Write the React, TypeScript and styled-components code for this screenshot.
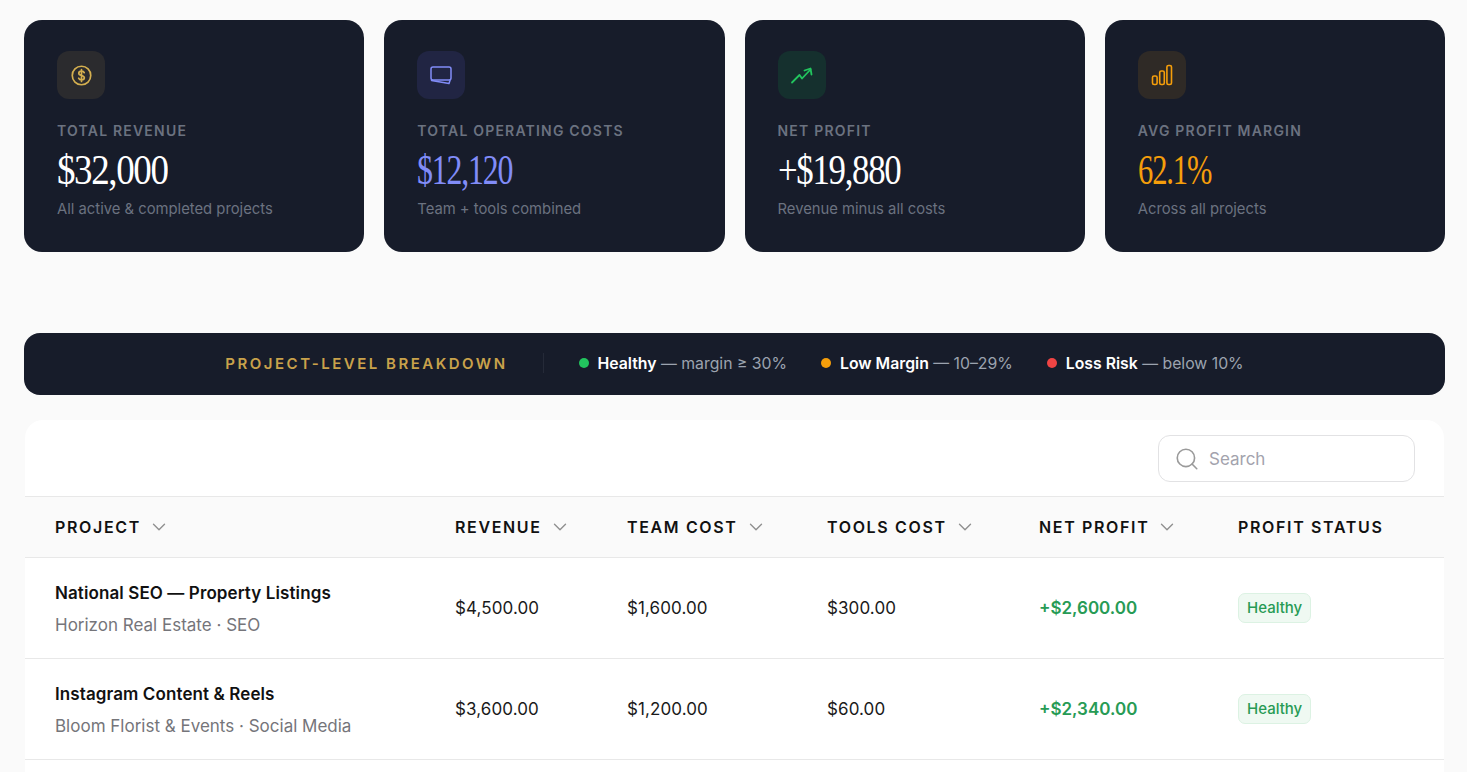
import { Search, ChevronDown } from 'lucide-react'
import styled, { createGlobalStyle } from 'styled-components'

const GlobalStyle = createGlobalStyle`
  html, body {
    margin: 0;
    height: 100%;
    overflow: hidden;
    background: #fafafa;
  }

  body {
    font-family: 'Inter', 'Liberation Sans', sans-serif;
  }
`

type Tone = 'gold' | 'indigo' | 'green' | 'amber'

const toneColors: Record<Tone, string> = {
  gold: '#d4af4f',
  indigo: '#818cf8',
  green: '#22c55e',
  amber: '#f59e0b',
}

const toneBackgrounds: Record<Tone, string> = {
  gold: '#2b2b2e',
  indigo: '#212543',
  green: '#15302e',
  amber: '#2f2a26',
}

const DollarIcon = () => (
  <svg viewBox="0 0 20 20" width="21" height="21" fill="none" stroke="currentColor" strokeWidth="1.6" strokeLinecap="round">
    <circle cx="10" cy="10" r="8.8" />
    <path d="M12.6 7.3c-.4-1-1.4-1.5-2.6-1.5-1.5 0-2.6.8-2.6 2s1 1.8 2.6 2.2 2.7 1 2.7 2.2-1.2 2-2.7 2c-1.3 0-2.3-.6-2.7-1.6M10 4.4v11.2" />
  </svg>
)

const ScreenIcon = () => (
  <svg viewBox="0 0 24 20" width="24" height="20" fill="none" stroke="currentColor" strokeWidth="1.5" strokeLinecap="round" strokeLinejoin="round">
    <rect x="2" y="2" width="20" height="13" rx="2" />
    <path d="M2.5 15.5 20 18.5l1-3" />
  </svg>
)

const TrendIcon = () => (
  <svg viewBox="0 0 24 20" width="24" height="20" fill="none" stroke="currentColor" strokeWidth="1.8" strokeLinecap="round" strokeLinejoin="round">
    <path d="M2 17.5 9.5 10l2.5 3.5L20.5 4.5" />
    <path d="M14.5 5.5l6-2 1 6" />
  </svg>
)

const BarsIcon = () => (
  <svg viewBox="0 0 22 22" width="22" height="22" fill="none" stroke="currentColor" strokeWidth="1.6" strokeLinejoin="round">
    <rect x="1.5" y="12" width="4.6" height="8.5" rx="1.6" />
    <rect x="8.7" y="7" width="4.6" height="13.5" rx="1.6" />
    <rect x="15.9" y="1.5" width="4.6" height="19" rx="1.6" />
  </svg>
)

const stats = [
  { tone: 'gold' as Tone, icon: <DollarIcon />, label: 'Total Revenue', value: '$32,000', color: '#ffffff', squeeze: 0.86, note: 'All active & completed projects' },
  { tone: 'indigo' as Tone, icon: <ScreenIcon />, label: 'Total Operating Costs', value: '$12,120', color: '#818cf8', squeeze: 0.74, note: 'Team + tools combined' },
  { tone: 'green' as Tone, icon: <TrendIcon />, label: 'Net Profit', value: '+$19,880', color: '#ffffff', squeeze: 0.81, note: 'Revenue minus all costs' },
  { tone: 'amber' as Tone, icon: <BarsIcon />, label: 'Avg Profit Margin', value: '62.1%', color: '#f59e0b', squeeze: 0.71, note: 'Across all projects' },
]

const legend = [
  { color: '#22c55e', name: 'Healthy', rule: 'margin ≥ 30%' },
  { color: '#f59e0b', name: 'Low Margin', rule: '10–29%' },
  { color: '#ef4444', name: 'Loss Risk', rule: 'below 10%' },
]

const columns = [
  { title: 'Project', sortable: true },
  { title: 'Revenue', sortable: true },
  { title: 'Team Cost', sortable: true },
  { title: 'Tools Cost', sortable: true },
  { title: 'Net Profit', sortable: true },
  { title: 'Profit Status', sortable: false },
]

const projects = [
  { name: 'National SEO — Property Listings', client: 'Horizon Real Estate · SEO', revenue: '$4,500.00', team: '$1,600.00', tools: '$300.00', net: '+$2,600.00' },
  { name: 'Instagram Content & Reels', client: 'Bloom Florist & Events · Social Media', revenue: '$3,600.00', team: '$1,200.00', tools: '$60.00', net: '+$2,340.00' },
]

const App = () => {
  return (
    <Page>
      <GlobalStyle />
      <StatsGrid>
        {stats.map((stat) => (
          <StatCard key={stat.label}>
            <IconTile $tone={stat.tone}>{stat.icon}</IconTile>
            <StatLabel>{stat.label}</StatLabel>
            <StatValue $color={stat.color} $squeeze={stat.squeeze}>
              {stat.value}
            </StatValue>
            <StatNote>{stat.note}</StatNote>
          </StatCard>
        ))}
      </StatsGrid>

      <Banner>
        <BannerTitle>Project-Level Breakdown</BannerTitle>
        <BannerDivider />
        {legend.map((item) => (
          <LegendItem key={item.name}>
            <LegendDot $color={item.color} />
            <span>
              <strong>{item.name}</strong> — {item.rule}
            </span>
          </LegendItem>
        ))}
      </Banner>

      <TableCard>
        <Toolbar>
          <SearchBox>
            <Search size={26} strokeWidth={1.5} color="#9a9a9a" />
            <SearchInput placeholder="Search" />
          </SearchBox>
        </Toolbar>
        <HeaderRow>
          {columns.map((column) => (
            <HeaderCell key={column.title}>
              {column.title}
              {column.sortable && <ChevronDown size={22} strokeWidth={1.5} color="#8f8f8f" />}
            </HeaderCell>
          ))}
        </HeaderRow>
        {projects.map((project) => (
          <BodyRow key={project.name}>
            <ProjectCell>
              <ProjectName>{project.name}</ProjectName>
              <ProjectClient>{project.client}</ProjectClient>
            </ProjectCell>
            <MoneyCell>{project.revenue}</MoneyCell>
            <MoneyCell>{project.team}</MoneyCell>
            <MoneyCell>{project.tools}</MoneyCell>
            <NetCell>{project.net}</NetCell>
            <div>
              <StatusBadge>Healthy</StatusBadge>
            </div>
          </BodyRow>
        ))}
      </TableCard>
    </Page>
  )
}

const Page = styled.div`
  height: 772px;
  box-sizing: border-box;
  padding: 20px 22px 0 24px;
  display: flex;
  flex-direction: column;
  overflow: hidden;
`

const StatsGrid = styled.div`
  display: grid;
  grid-template-columns: repeat(4, 1fr);
  gap: 20px;
`

const StatCard = styled.div`
  height: 232px;
  box-sizing: border-box;
  padding: 31px 33px 0;
  background: #171c2a;
  border-radius: 18px;
`

const IconTile = styled.div<{ $tone: Tone }>`
  width: 48px;
  height: 48px;
  border-radius: 12px;
  display: flex;
  align-items: center;
  justify-content: center;
  color: ${(p) => toneColors[p.$tone]};
  background: ${(p) => toneBackgrounds[p.$tone]};
`

const StatLabel = styled.div`
  margin-top: 24px;
  font-size: 14px;
  line-height: 16px;
  font-weight: 600;
  letter-spacing: 1.2px;
  text-transform: uppercase;
  color: #6b7280;
`

const StatValue = styled.div<{ $color: string; $squeeze: number }>`
  margin-top: 6px;
  font-family: 'Liberation Serif', serif;
  font-size: 43px;
  line-height: 50px;
  letter-spacing: -1.6px;
  white-space: nowrap;
  transform: scaleX(${(p) => p.$squeeze});
  transform-origin: left center;
  color: ${(p) => p.$color};
`

const StatNote = styled.div`
  margin-top: 4px;
  font-size: 14.8px;
  line-height: 20px;
  color: #6b7280;
`

const Banner = styled.div`
  margin-top: 81px;
  height: 62px;
  flex: none;
  display: flex;
  align-items: center;
  justify-content: center;
  padding: 0 0 2px;
  box-sizing: border-box;
  gap: 34px;
  background: #171c2a;
  border-radius: 16px;
  font-size: 15.8px;
  color: #9ca3af;

  strong {
    font-weight: 600;
    color: #ffffff;
  }
`

const BannerTitle = styled.div`
  font-size: 15px;
  font-weight: 600;
  letter-spacing: 2.5px;
  text-transform: uppercase;
  color: #c9a24b;
`

const BannerDivider = styled.div`
  width: 1px;
  height: 20px;
  margin: 0 1px;
  background: #252a38;
`

const LegendItem = styled.div`
  display: flex;
  align-items: center;
  gap: 9px;
`

const LegendDot = styled.span<{ $color: string }>`
  width: 10px;
  height: 10px;
  border-radius: 50%;
  background: ${(p) => p.$color};
`

const TableCard = styled.div`
  margin: 25px 1px 0;
  flex: 1;
  background: #ffffff;
  border-radius: 18px 18px 0 0;
`

const Toolbar = styled.div`
  height: 77px;
  box-sizing: border-box;
  padding: 15px 29px 0 0;
  display: flex;
  justify-content: flex-end;
  border-bottom: 1px solid #e8e8e8;
`

const SearchBox = styled.label`
  width: 257px;
  height: 47px;
  box-sizing: border-box;
  padding: 0 15px;
  display: flex;
  align-items: center;
  gap: 9px;
  border: 1px solid #e2e2e4;
  border-radius: 12px;
  background: #ffffff;
`

const SearchInput = styled.input`
  flex: 1;
  min-width: 0;
  border: none;
  outline: none;
  padding: 1px 0 0;
  background: transparent;
  font: inherit;
  font-size: 17px;
  color: #333333;

  &::placeholder {
    color: #a3a3ad;
  }
`

const tableColumns = '400px 172px 200px 212px 199px 1fr'

const HeaderRow = styled.div`
  height: 61px;
  box-sizing: border-box;
  padding-left: 30px;
  display: grid;
  grid-template-columns: ${tableColumns};
  align-items: center;
  background: #fafafa;
  border-bottom: 1px solid #e8e8e8;
`

const HeaderCell = styled.div`
  display: flex;
  align-items: center;
  gap: 7px;
  font-size: 16px;
  font-weight: 600;
  letter-spacing: 1.65px;
  text-transform: uppercase;
  color: #111111;
`

const BodyRow = styled.div`
  height: 101px;
  box-sizing: border-box;
  padding-left: 30px;
  display: grid;
  grid-template-columns: ${tableColumns};
  align-items: center;
  border-bottom: 1px solid #e8e8e8;
`

const ProjectCell = styled.div`
  padding-top: 2px;
`

const ProjectName = styled.div`
  font-size: 17px;
  line-height: 24px;
  font-weight: 600;
  letter-spacing: 0.1px;
  color: #111111;
`

const ProjectClient = styled.div`
  margin-top: 8px;
  font-size: 17px;
  line-height: 24px;
  color: #75757a;
`

const MoneyCell = styled.div`
  font-size: 17px;
  letter-spacing: 0.1px;
  color: #1a1a1a;
`

const NetCell = styled.div`
  font-size: 17px;
  font-weight: 600;
  color: #279b55;
`

const StatusBadge = styled.span`
  display: inline-block;
  padding: 5px 8px;
  font-size: 15px;
  line-height: 18px;
  font-weight: 500;
  color: #279b55;
  background: #eff9f2;
  border: 1px solid #dcf2e3;
  border-radius: 7px;
`

export default App
